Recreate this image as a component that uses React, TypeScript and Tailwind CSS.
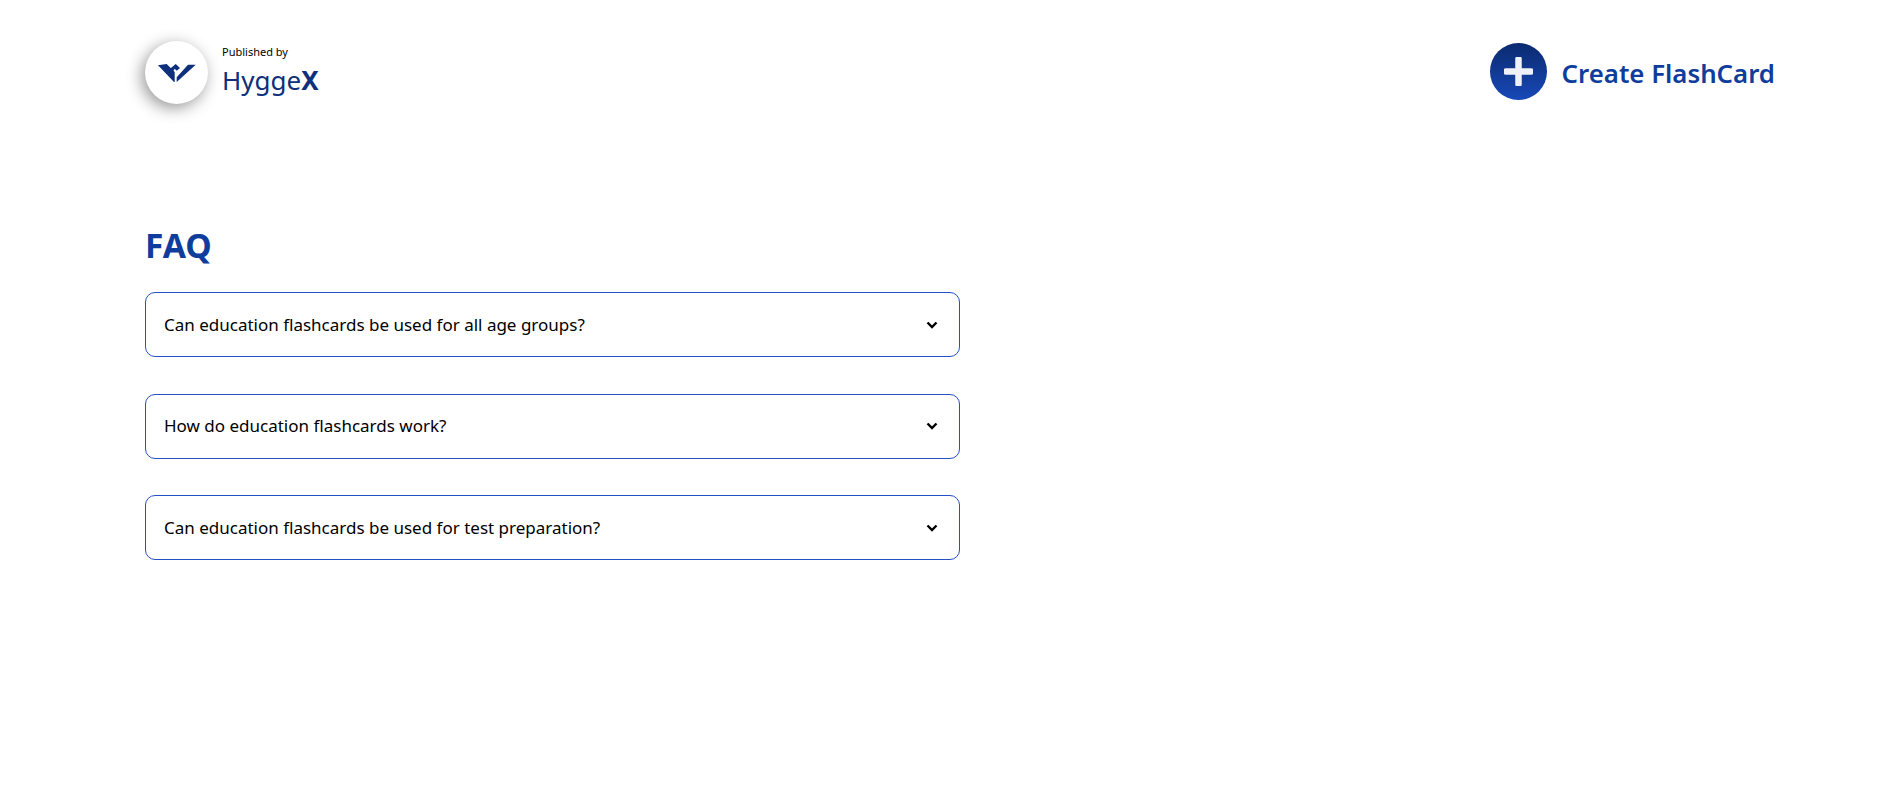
const faqs = [
  "Can education flashcards be used for all age groups?",
  "How do education flashcards work?",
  "Can education flashcards be used for test preparation?",
];

function Logo() {
  return (
    <svg viewBox="0 0 38 18" className="w-[38px] h-[18px]">
      <path
        d="M0 1.3 L8.7 0 L16.7 8 L16.7 18 L16 18 Z M37.7 .7 L30 .7 L18.7 13.3 L18.7 18 Z M12 4.7 L17.7 0 L22 4 L18.7 6.7 L16.7 4.7 L15.3 7.3 Z"
        fill="#0d2f7c"
      />
    </svg>
  );
}

function Chevron() {
  return (
    <svg viewBox="0 0 12 8" className="w-[12px] h-[8px]">
      <path d="M1.5 1.5 L6 6 L10.5 1.5" fill="none" stroke="black" strokeWidth="2.4" />
    </svg>
  );
}

export default function App() {
  return (
    <div className="min-h-[804px] bg-white pl-[145px] pr-[115px] font-['Noto_Sans',sans-serif]">
      <header className="flex items-start justify-between pt-[41px]">
        <div className="flex items-center gap-[14px]">
          <div className="w-[63px] h-[63px] rounded-full bg-white flex items-center justify-center shadow-[-3px_4px_16px_rgba(0,0,0,0.42)]">
            <Logo />
          </div>
          <div className="flex flex-col text-[#0d2f7c]">
            <span className="text-[11px] leading-[14px] text-black -mt-[2px]">Published by</span>
            <span className="text-[26px] leading-[36px] mt-[3px]">
              Hygge<b className="font-bold">X</b>
            </span>
          </div>
        </div>
        <button className="flex items-center gap-[15px] mt-[2px]">
          <span className="w-[57px] h-[57px] rounded-full bg-gradient-to-b from-[#0b2a70] to-[#1849b8] flex items-center justify-center">
            <svg viewBox="0 0 29 29" className="w-[29px] h-[29px]">
              <path d="M14.5 2 V27 M2 14.5 H27" fill="none" stroke="#eef1f8" strokeWidth="6.5" strokeLinecap="round" />
            </svg>
          </span>
          <span className="text-[25.8px] font-semibold text-[#0f3d9c] relative top-[2px]">Create FlashCard</span>
        </button>
      </header>

      <main className="mt-[116px] w-[815px]">
        <h1 className="text-[33.5px] leading-[50px] font-bold text-[#0f3d9c]">FAQ</h1>
        <div className="mt-[22px] flex flex-col gap-[36.5px]">
          {faqs.map((q) => (
            <div
              key={q}
              className="h-[65px] rounded-[10px] border border-[#2450c8] pl-[18px] pr-[21px] flex items-center justify-between text-[17px] text-black"
            >
              <span>{q}</span>
              <Chevron />
            </div>
          ))}
        </div>
      </main>
    </div>
  );
}
